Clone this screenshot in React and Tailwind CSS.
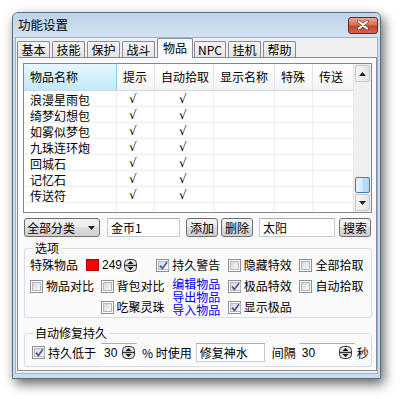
import React from 'react';

const items = ['浪漫星雨包', '绮梦幻想包', '如雾似梦包', '九珠连环炮', '回城石', '记忆石', '传送符', ''];

const tabs = [
  { label: '基本', cls: 'w-[33px]' },
  { label: '技能', cls: 'w-[33px] ml-[2px]' },
  { label: '保护', cls: 'w-[33px] ml-[2px]' },
  { label: '战斗', cls: 'w-[33px] ml-[2px]' },
  { label: '物品', cls: 'w-[36px] ml-[2px]', active: true },
  { label: 'NPC', cls: 'w-[32px] ml-[1px]' },
  { label: '挂机', cls: 'w-[33px] ml-[2px]' },
  { label: '帮助', cls: 'w-[33px] ml-[2px]' },
];

const CheckBox = ({ checked }) => (
  <span className="w-[13px] h-[13px] shrink-0 border border-[#8e8f8f] bg-white p-[1px] flex">
    <span className="flex-1 border border-[#b4b8bc] bg-[linear-gradient(135deg,#d6d8da,#f8f8f8)] flex items-center justify-center">
      {checked && (
        <svg width="9" height="9" viewBox="0 0 9 9">
          <path d="M1 4.6 L3.4 7.4 L8 1.2" fill="none" stroke="#46589a" strokeWidth="1.7" />
        </svg>
      )}
    </span>
  </span>
);

const CheckItem = ({ label, checked, cls }) => (
  <div className={`flex items-center gap-[3px] ${cls}`}>
    <CheckBox checked={checked} />
    <span>{label}</span>
  </div>
);

const Spin = () => (
  <svg width="13" height="13" viewBox="0 0 13 13">
    <rect x="0.5" y="0.5" width="12" height="12" rx="4" fill="#e4e4e4" stroke="#333" />
    <line x1="1" y1="6.5" x2="12" y2="6.5" stroke="#333" strokeWidth="1.4" />
    <path d="M6.5 2 L9.5 5 H3.5Z" fill="#111" />
    <path d="M6.5 11 L9.5 8 H3.5Z" fill="#111" />
  </svg>
);

const Btn = ({ children, cls }) => (
  <div className={`h-[19px] border border-[#707070] rounded-[3px] bg-[linear-gradient(#f2f2f2_0%,#ebebeb_50%,#dddddd_50%,#cfcfcf_100%)] flex items-center justify-center ${cls}`}>
    {children}
  </div>
);

const Field = ({ children, cls }) => (
  <div className={`h-[19px] border border-[#c5cad1] border-t-[#abadb3] bg-white flex items-center ${cls}`}>
    {children}
  </div>
);

const Arrow = ({ down }) => (
  <svg width="7" height="4" viewBox="0 0 7 4">
    <path d={down ? 'M0 0 H7 L3.5 4Z' : 'M3.5 0 L7 4 H0Z'} fill="#222" />
  </svg>
);

export default function App() {
  return (
    <div className="w-[401px] h-[399px] bg-white pt-[12px] pl-[12px] font-['Noto_Sans_CJK_SC',sans-serif] text-[12px] leading-[14px] text-black">
      <div className="w-[369px] h-[367px] border border-[#5d6e82] rounded-t-[6px] bg-[#c9dbef] flex flex-col shadow-[3px_5px_12px_rgba(0,0,0,0.6)]">
        {/* title bar */}
        <div className="h-[24px] shrink-0 flex items-center pl-[5px] pr-[2px] rounded-t-[5px] bg-[linear-gradient(#bcd2ec,#d3e2f2)]">
          <span className="text-[12.5px]">功能设置</span>
          <div className="ml-auto w-[30px] h-[17px] rounded-[3px] border border-[#6a2a1e] bg-[linear-gradient(#e9a794_0%,#d8705a_45%,#c4432b_55%,#d0654a_100%)] flex items-center justify-center">
            <svg width="12" height="10" viewBox="0 0 12 10">
              <path d="M2 1.5 L10 8.5 M10 1.5 L2 8.5" stroke="#6b4a44" strokeWidth="3.6" strokeLinecap="round" />
              <path d="M2 1.5 L10 8.5 M10 1.5 L2 8.5" stroke="#ffffff" strokeWidth="2" strokeLinecap="round" />
            </svg>
          </div>
        </div>

        {/* body */}
        <div className="flex-1 mx-[2px] mb-[4px] border border-[#9fb3cb] bg-[#f0f0f0] flex flex-col">
          <div className="h-[19px] shrink-0 flex items-end pl-[1px]">
            {tabs.map((t) =>
              t.active ? (
                <div key={t.label} className={`relative z-10 h-[20px] -mb-[1px] border-x border-t border-[#898c95] rounded-t-[2px] bg-[#fafafa] flex items-center justify-center pb-[1px] ${t.cls}`}>
                  {t.label}
                </div>
              ) : (
                <div key={t.label} className={`h-[16px] border-x border-t border-[#898c95] rounded-t-[2px] bg-[linear-gradient(#f5f5f5,#e4e4e4)] flex items-center justify-center ${t.cls}`}>
                  {t.label}
                </div>
              )
            )}
          </div>

          {/* tab panel */}
          <div className="flex-1 ml-[1px] mb-[2px] border border-[#898c95] bg-[#fafafa] pl-[5px] pr-[3px] pt-[5px] pb-[3px] flex flex-col">
            {/* list */}
            <div className="w-[349px] h-[150px] shrink-0 border border-[#828790] bg-white flex">
              <div className="w-[329px] flex flex-col overflow-hidden">
                <div className="h-[27px] shrink-0 flex border-b border-[#d5d5d5] bg-[linear-gradient(#ffffff,#f3f4f6)]">
                  <div className="w-[93px] pl-[6px] flex items-center border-r border-[#93c9e3] bg-[linear-gradient(#e6f7fe,#c4e9fb)]">物品名称</div>
                  <div className="w-[38px] pl-[6px] flex items-center border-r border-[#e5e5e5]">提示</div>
                  <div className="w-[59px] pl-[6px] flex items-center border-r border-[#e5e5e5]">自动拾取</div>
                  <div className="w-[61px] pl-[6px] flex items-center border-r border-[#e5e5e5]">显示名称</div>
                  <div className="w-[38px] pl-[6px] flex items-center border-r border-[#e5e5e5]">特殊</div>
                  <div className="w-[40px] pl-[6px] flex items-center">传送</div>
                </div>
                {items.map((name, i) => (
                  <div key={i} className="h-[16px] shrink-0 flex border-b border-[#efefef]">
                    <div className="w-[93px] pl-[6px] pt-[2px] border-r border-[#efefef]">{name}</div>
                    <div className="w-[38px] pl-[12px] pt-[2px] leading-[13px] border-r border-[#efefef] font-['DejaVu_Sans',sans-serif] text-[12px] italic">{name && '√'}</div>
                    <div className="w-[59px] pl-[24px] pt-[2px] leading-[13px] border-r border-[#efefef] font-['DejaVu_Sans',sans-serif] text-[12px] italic">{name && '√'}</div>
                    <div className="w-[61px] border-r border-[#efefef]" />
                    <div className="w-[38px] border-r border-[#efefef]" />
                    <div className="w-[40px]" />
                  </div>
                ))}
              </div>
              {/* scrollbar */}
              <div className="w-[18px] border-l border-[#e6e6e6] bg-[#f0f0f0] flex flex-col px-[1px] py-[1px]">
                <div className="h-[17px] shrink-0 rounded-[2px] border border-[#c9c9c9] bg-[linear-gradient(90deg,#f4f4f4,#e4e4e4)] flex items-center justify-center">
                  <Arrow />
                </div>
                <div className="flex-1 flex flex-col justify-end pb-[1px]">
                  <div className="h-[16px] rounded-[2px] border border-[#3c7fb1] bg-[linear-gradient(90deg,#e8f5fc_0%,#d6ecf8_45%,#b9dcf3_55%,#b2d8f1_100%)]" />
                </div>
                <div className="h-[17px] shrink-0 rounded-[2px] border border-[#c9c9c9] bg-[linear-gradient(90deg,#f4f4f4,#e4e4e4)] flex items-center justify-center">
                  <Arrow down />
                </div>
              </div>
            </div>

            {/* controls */}
            <div className="mt-[5px] h-[19px] shrink-0 flex ml-[1px]">
              <Btn cls="w-[76px] justify-start pl-[2px]">
                <span>全部分类</span>
                <span className="ml-auto mr-[4px] flex"><Arrow down /></span>
              </Btn>
              <Field cls="ml-[7px] w-[73px] pl-[3px]">金币1</Field>
              <Btn cls="ml-[6px] w-[32px]">添加</Btn>
              <Btn cls="ml-[3px] w-[32px]">删除</Btn>
              <Field cls="ml-[6px] w-[76px] pl-[3px]">太阳</Field>
              <Btn cls="ml-[4px] w-[32px]">搜索</Btn>
            </div>

            {/* options */}
            <fieldset className="mt-[4px] ml-[1px] w-[348px] min-w-0 border border-[#d5dfe5] rounded-[3px] pl-[5px]">
              <legend className="ml-[3px] px-[2px] leading-[14px]">选项</legend>
              <div className="h-[20px] flex items-center">
                <div className="w-[127px] flex items-center">
                  <span>特殊物品</span>
                  <div className="ml-[5px] w-[57px] h-[18px] bg-white flex items-center">
                    <span className="ml-[3px] w-[13px] h-[12px] bg-[#ff0000] border border-[#b00000]" />
                    <span className="ml-[3px] font-['Liberation_Sans',sans-serif]">249</span>
                    <span className="ml-auto mr-[3px] flex"><Spin /></span>
                  </div>
                </div>
                <CheckItem cls="w-[72px]" checked label="持久警告" />
                <CheckItem cls="w-[72px]" label="隐藏特效" />
                <CheckItem cls="w-[72px]" label="全部拾取" />
              </div>
              <div className="flex">
                <div className="w-[71px] flex flex-col">
                  <CheckItem cls="h-[22px]" label="物品对比" />
                </div>
                <div className="w-[72px] flex flex-col">
                  <CheckItem cls="h-[22px]" label="背包对比" />
                  <CheckItem cls="h-[20px]" label="吃聚灵珠" />
                </div>
                <div className="w-[56px] flex flex-col pt-[2px] leading-[13px] text-[#0000ff]">
                  <span>编辑物品</span>
                  <span>导出物品</span>
                  <span>导入物品</span>
                </div>
                <div className="w-[72px] flex flex-col">
                  <CheckItem cls="h-[22px]" checked label="极品特效" />
                  <CheckItem cls="h-[20px]" checked label="显示极品" />
                </div>
                <div className="w-[72px] flex flex-col">
                  <CheckItem cls="h-[22px]" label="自动拾取" />
                </div>
              </div>
            </fieldset>

            {/* auto repair */}
            <fieldset className="mt-[8px] ml-[1px] w-[348px] min-w-0 border border-[#d5dfe5] rounded-[3px] pl-[7px] pt-[3px] pb-[4px]">
              <legend className="ml-[1px] px-[2px] leading-[14px]">自动修复持久</legend>
              <div className="h-[19px] flex items-center">
                <CheckItem checked label="持久低于" />
                <Field cls="ml-[5px] w-[36px] pl-[2px] border-transparent">
                  <span className="font-['Liberation_Sans',sans-serif]">30</span>
                  <span className="ml-auto mr-[1px] flex"><Spin /></span>
                </Field>
                <span className="ml-[5px]">% 时使用</span>
                <Field cls="ml-[4px] w-[69px] pl-[3px]">修复神水</Field>
                <span className="ml-[7px]">间隔</span>
                <Field cls="ml-[3px] w-[56px] pl-[2px] border-transparent">
                  <span className="font-['Liberation_Sans',sans-serif]">30</span>
                  <span className="ml-auto mr-[2px] flex"><Spin /></span>
                </Field>
                <span className="ml-[2px]">秒</span>
              </div>
            </fieldset>
          </div>
        </div>
      </div>
    </div>
  );
}
